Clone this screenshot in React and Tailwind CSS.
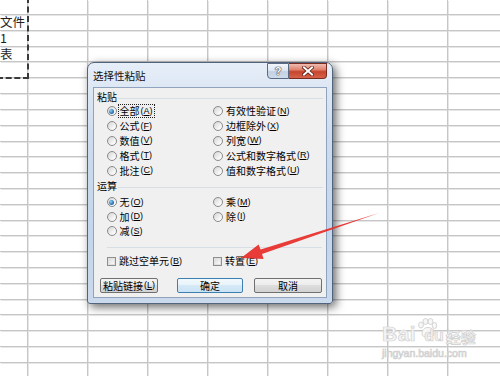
import React from "react";

const ROWS = 24;
const COLS = 9;

function Grid() {
  const cells = [];
  for (let r = 0; r < ROWS; r++) {
    for (let c = 0; c < COLS; c++) {
      let content = null;
      let just = "justify-start";
      if (c === 0 && r === 1) {
        content = "文件";
        just = "justify-end pr-[2px]";
      } else if (c === 0 && r === 2) {
        content = "1";
      } else if (c === 0 && r === 3) {
        content = "表";
      }
      cells.push(
        <div
          key={`${r}-${c}`}
          className={`flex items-center overflow-hidden whitespace-nowrap border-r border-b border-[#c6c6c6] shadow-[1px_1px_0_#e6e6e6] ${just}`}
        >
          {content && (
            <span className="font-['Noto_Sans_CJK_SC',sans-serif] text-[12.5px] leading-none text-[#1e1e1e]">
              {content}
            </span>
          )}
        </div>
      );
    }
  }
  return (
    <div className="grid grid-cols-[28px_repeat(8,60px)] grid-rows-[15px_repeat(23,15.82px)]">
      {cells}
    </div>
  );
}

function Acc({ k }) {
  return (
    <span className="ml-[1px] font-['Liberation_Sans',sans-serif] text-[9px]">
      (<span className="underline underline-offset-1">{k}</span>)
    </span>
  );
}

function Radio({ checked }) {
  return (
    <span className="flex h-[10px] w-[10px] shrink-0 items-center justify-center rounded-full border border-[#8a8a8a] bg-[linear-gradient(135deg,#d4d4d4,#f7f7f7_70%,#ffffff)]">
      {checked && (
        <span className="h-[5px] w-[5px] rounded-full bg-[radial-gradient(circle_at_35%_35%,#8fd0f6,#2a74b8_60%,#1a4f86)]" />
      )}
    </span>
  );
}

function Check() {
  return (
    <span className="flex h-[9px] w-[9px] shrink-0 items-center justify-center border border-[#8f8f8f] bg-white">
      <span className="h-[7px] w-[7px] border border-[#e0e0e0] bg-[linear-gradient(135deg,#dcdcdc,#fafafa)]" />
    </span>
  );
}

function Opt({ label, k, checked, focus }) {
  return (
    <div className="flex items-center gap-[3px]">
      <Radio checked={checked} />
      <span
        className={
          focus
            ? "flex items-center outline-1 outline-dotted outline-[#222] outline-offset-[1px]"
            : "flex items-center"
        }
      >
        {label}
        <Acc k={k} />
      </span>
    </div>
  );
}

function OptRow({ left, right, h }) {
  return (
    <div className={`flex items-center pl-[12.5px] ${h}`}>
      <div className="w-[106.5px]">{left}</div>
      <div>{right}</div>
    </div>
  );
}

function GroupLabel({ text }) {
  return (
    <div className="flex h-[14px] items-center pl-[3px] pr-[3px]">
      <span className="w-[21px]">{text}</span>
      <span className="mt-[2px] h-px flex-1 bg-[#d5dfe5]" />
    </div>
  );
}

function Dialog() {
  return (
    <div className="absolute left-[87px] top-[62px] flex h-[242px] w-[246px] flex-col rounded-t-[7px] rounded-b-[3px] border border-[#52637c] bg-[linear-gradient(#e6eef8,#cddcee_30%,#c4d6ec_70%,#cad9ec)] shadow-[3px_3px_10px_rgba(0,0,0,0.6)] font-['Noto_Sans_CJK_SC',sans-serif] text-[10px] leading-none text-black">
      {/* title bar */}
      <div className="flex h-[24px] items-start pl-[5px] pr-[5px]">
        <span className="mt-[8px] text-[10.5px] text-[#111]">选择性粘贴</span>
        <div className="ml-auto flex">
          <div className="flex h-[16px] w-[22px] items-center justify-center rounded-bl-[4px] border border-[#5a6a82] bg-[linear-gradient(#f2f6fb,#dde6f1_45%,#c3d1e3_55%,#cfdbea)] font-['Liberation_Sans',sans-serif] text-[11px] font-bold text-[#ffffff] [text-shadow:0_0_1px_#27344a,0_0_1px_#27344a,0_0_1px_#27344a]">
            ?
          </div>
          <div className="flex h-[16px] w-[38px] items-center justify-center rounded-br-[4px] border border-l-0 border-[#7a2b20] bg-[linear-gradient(#eebcb1,#e0836f_40%,#c8452f_55%,#d6624a)]">
            <svg width="12" height="10" viewBox="0 0 12 10">
              <path d="M2 1.5 L10 8.5 M10 1.5 L2 8.5" stroke="#5a1d12" strokeWidth="3.6" strokeLinecap="square" />
              <path d="M2 1.5 L10 8.5 M10 1.5 L2 8.5" stroke="#ffffff" strokeWidth="2" strokeLinecap="square" />
            </svg>
          </div>
        </div>
      </div>
      {/* client */}
      <div className="mx-[5px] flex h-[211px] w-[234px] flex-col border border-[#8fa3bf] bg-[#f0f0f0]">
        <div className="mt-[2px]">
          <GroupLabel text="粘贴" />
        </div>
        <div className="flex flex-col">
          <OptRow h="h-[14.8px]" left={<Opt label="全部" k="A" checked focus />} right={<Opt label="有效性验证" k="N" />} />
          <OptRow h="h-[14.8px]" left={<Opt label="公式" k="F" />} right={<Opt label="边框除外" k="X" />} />
          <OptRow h="h-[14.8px]" left={<Opt label="数值" k="V" />} right={<Opt label="列宽" k="W" />} />
          <OptRow h="h-[14.8px]" left={<Opt label="格式" k="T" />} right={<Opt label="公式和数字格式" k="R" />} />
          <OptRow h="h-[14.8px]" left={<Opt label="批注" k="C" />} right={<Opt label="值和数字格式" k="U" />} />
        </div>
        <div className="mt-[1.5px]">
          <GroupLabel text="运算" />
        </div>
        <div className="mt-[1.5px] flex flex-col">
          <OptRow h="h-[14.6px]" left={<Opt label="无" k="O" checked />} right={<Opt label="乘" k="M" />} />
          <OptRow h="h-[14.6px]" left={<Opt label="加" k="D" />} right={<Opt label="除" k="I" />} />
          <OptRow h="h-[14.6px]" left={<Opt label="减" k="S" />} right={null} />
        </div>
        <div className="ml-[13px] mr-[4px] mt-[8.5px] h-px bg-[#d5dfe5]" />
        <div className="mt-[6px] flex h-[14px] items-center pl-[13px]">
          <div className="flex w-[106px] items-center gap-[3px]">
            <Check />
            <span className="flex items-center">
              跳过空单元
              <Acc k="B" />
            </span>
          </div>
          <div className="flex items-center gap-[3px]">
            <Check />
            <span className="flex items-center">
              转置
              <Acc k="E" />
            </span>
          </div>
        </div>
        <div className="mt-[10px] flex h-[15px] pl-[6px]">
          <button className="flex h-[15px] w-[58px] items-center justify-center rounded-[2px] border border-[#707070] bg-[linear-gradient(#f4f4f4,#ebebeb_50%,#dddddd_50%,#d2d2d2)] text-[10px] leading-none">
            粘贴链接
            <Acc k="L" />
          </button>
          <button className="ml-[19px] flex h-[15px] w-[66px] items-center justify-center rounded-[2px] border border-[#3c7fb1] bg-[linear-gradient(#f3f9fd,#e6f2fa_50%,#d5e9f7_50%,#cbe3f5)] text-[10px] leading-none">
            确定
          </button>
          <button className="ml-[11px] flex h-[15px] w-[68px] items-center justify-center rounded-[2px] border border-[#707070] bg-[linear-gradient(#f4f4f4,#ebebeb_50%,#dddddd_50%,#d2d2d2)] text-[10px] leading-none">
            取消
          </button>
        </div>
      </div>
    </div>
  );
}

function Watermark() {
  return (
    <div className="absolute left-[382px] top-[318px] flex flex-col font-['Liberation_Sans',sans-serif] text-[#f5f5f5] [-webkit-text-stroke:0.7px_#cfcfcf]">
      <div className="relative flex items-end">
        <span className="text-[21px] font-bold leading-none tracking-[0.5px]">Bai</span>
        <svg width="22" height="20" viewBox="0 0 22 20" className="mb-[6px]">
          <g fill="#f7f7f7" stroke="#d0d0d0" strokeWidth="0.9">
            <ellipse cx="5" cy="7" rx="2.4" ry="3" />
            <ellipse cx="9.5" cy="3.5" rx="2.4" ry="3" />
            <ellipse cx="14.5" cy="3.5" rx="2.4" ry="3" />
            <ellipse cx="18.5" cy="7.5" rx="2.3" ry="3" />
            <path d="M6 16 C6 11 9 9.5 12 9.5 C15 9.5 18 11 18 16 C18 19 14 19 12 18 C10 19 6 19 6 16 Z" />
          </g>
        </svg>
        <span className="-ml-[14px] text-[16px] font-bold leading-none">du</span>
        <span className="ml-[2px] font-['Noto_Sans_CJK_SC',sans-serif] text-[15px] font-bold leading-none">经验</span>
      </div>
      <span className="mt-[4px] text-[10.5px] leading-none">jingyan.baidu.com</span>
    </div>
  );
}

export default function App() {
  return (
    <div className="relative h-[376px] w-[500px] overflow-hidden bg-white">
      <Grid />
      {/* copy marquee */}
      <div className="absolute left-[-3px] top-[-3px] h-[82px] w-[32px] border-2 border-dashed border-[#3a3a3a]" />
      <Dialog />
      <Watermark />
      <svg className="pointer-events-none absolute left-0 top-0" width="500" height="376" viewBox="0 0 500 376">
        <polygon
          points="379,213 260.6,249.6 258.6,244.6 241,258 263.6,259 262,254"
          fill="#e8302c"
          opacity="0.95"
        />
      </svg>
    </div>
  );
}
